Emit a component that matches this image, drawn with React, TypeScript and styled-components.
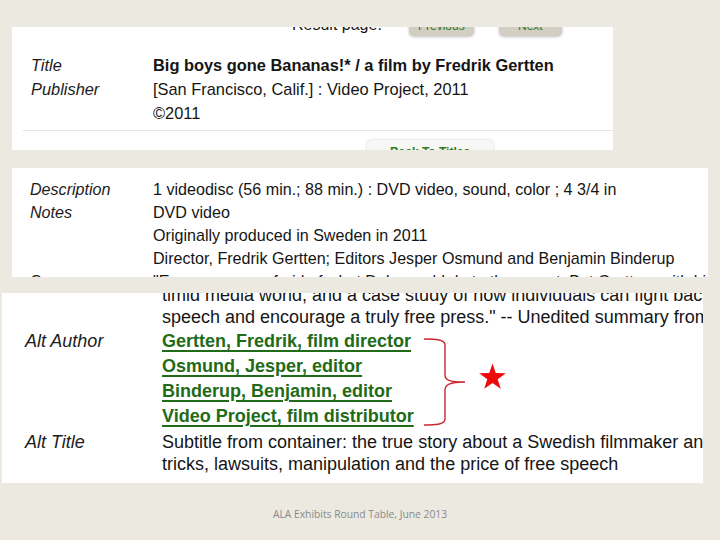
import React from "react";
import styled, { createGlobalStyle } from "styled-components";

const GlobalStyle = createGlobalStyle`
body {
  margin: 0;
  background-color: #ece9e0;
  font-family: "Liberation Sans", Arial, sans-serif;
  color: #151515;
}
`;

const Page = styled.main`
  width: 720px;
  height: 540px;
  box-sizing: border-box;
  padding-top: 27px;
  display: flex;
  flex-direction: column;
  align-items: flex-start;
  overflow: hidden;
`;

const Panel = styled.section<{ $left: number; $width: number; $height: number; $gap?: number }>`
  position: relative;
  flex: none;
  margin-left: ${(p) => p.$left}px;
  margin-top: ${(p) => p.$gap ?? 0}px;
  width: ${(p) => p.$width}px;
  height: ${(p) => p.$height}px;
  background: #fff;
  overflow: hidden;
`;

const TopBar = styled.div`
  height: 9px;
  display: flex;
  align-items: flex-end;
  gap: 25px;
  padding-left: 280px;
`;

const ResultText = styled.span`
  font-size: 16px;
  line-height: 16px;
  margin-bottom: 3px;
  margin-right: 2px;
`;

const PageButton = styled.span<{ $width: number }>`
  box-sizing: border-box;
  width: ${(p) => p.$width}px;
  padding-bottom: 3px;
  text-align: center;
  font-size: 12px;
  line-height: 14px;
  color: #2f7a25;
  background: #d2cec2;
  border-radius: 0 0 5px 5px;
  box-shadow: 0 1px 3px rgba(0, 0, 0, 0.25);
`;

const Record = styled.dl<{ $label: number; $pad: number; $size: number; $line: number; $top: number }>`
  display: grid;
  grid-template-columns: ${(p) => p.$label}px 1fr;
  margin: ${(p) => p.$top}px 0 0;
  padding-left: ${(p) => p.$pad}px;
  font-size: ${(p) => p.$size}px;
  line-height: ${(p) => p.$line}px;
  white-space: nowrap;
`;

const Label = styled.dt<{ $line?: number }>`
  margin: 0;
  font-style: italic;
  color: #1c1c1c;
  ${(p) => (p.$line ? `line-height: ${p.$line}px;` : "")}
  padding-top: ${(p) => (p.$line ? 1 : 0)}px;
`;

const Value = styled.dd<{ $pad?: string }>`
  margin: 0;
  padding: ${(p) => p.$pad ?? "0"};
`;

const Line = styled.div``;

const Link = styled.a`
  display: block;
  width: max-content;
  line-height: 25px;
  font-weight: bold;
  color: #1f6b17;
  text-decoration: underline;
  text-decoration-thickness: 2px;
  text-underline-offset: 3px;
`;

const Divider = styled.hr`
  margin: 5px 0 0 11px;
  border: none;
  height: 1px;
  background: #e4e4e4;
`;

const BackButton = styled.div`
  box-sizing: border-box;
  margin: 9px 0 0 355px;
  width: 126px;
  height: 22px;
  padding-top: 5px;
  text-align: center;
  font-size: 12px;
  line-height: 14px;
  font-weight: bold;
  color: #2f7a25;
  background: #f7f7f5;
  border-radius: 5px;
  box-shadow: 0 0 3px rgba(0, 0, 0, 0.2);
`;

const Annotation = styled.svg`
  position: absolute;
  left: 416px;
  top: 42px;
`;

const Footer = styled.footer`
  align-self: center;
  margin-top: 24px;
  font-family: "Open Sans", "Liberation Sans", sans-serif;
  font-size: 10.3px;
  line-height: 14px;
  color: #8a8a8a;
`;

export default function App() {
  return (
    <Page>
      <GlobalStyle />
      <Panel $left={12} $width={601} $height={123}>
        <TopBar>
          <ResultText>Result page:</ResultText>
          <PageButton $width={65}>Previous</PageButton>
          <PageButton $width={63}>Next</PageButton>
        </TopBar>
        <Record $label={122} $pad={19} $size={16.4} $line={24} $top={17}>
          <Label>Title</Label>
          <Value>
            <strong>Big boys gone Bananas!* / a film by Fredrik Gertten</strong>
          </Value>
          <Label>Publisher</Label>
          <Value>
            <Line>[San Francisco, Calif.] : Video Project, 2011</Line>
            <Line>©2011</Line>
          </Value>
        </Record>
        <Divider />
        <BackButton>Back To Titles</BackButton>
      </Panel>

      <Panel $left={12} $width={696} $height={109} $gap={18}>
        <Record $label={123} $pad={18} $size={16.1} $line={23} $top={10}>
          <Label>Description</Label>
          <Value>1 videodisc (56 min.; 88 min.) : DVD video, sound, color ; 4 3/4 in</Value>
          <Label>Notes</Label>
          <Value>
            <Line>DVD video</Line>
            <Line>Originally produced in Sweden in 2011</Line>
            <Line>Director, Fredrik Gertten; Editors Jesper Osmund and Benjamin Binderup</Line>
          </Value>
          <Label>Summary</Label>
          <Value>"Everyone was afraid of what Dole would do to them next. But Gertten, with his</Value>
        </Record>
      </Panel>

      <Panel $left={2} $width={701} $height={190} $gap={16}>
        <Record $label={137} $pad={23} $size={18} $line={22} $top={-9}>
          <Label />
          <Value>
            <Line>timid media world, and a case study of how individuals can fight back to defend free</Line>
            <Line>speech and encourage a truly free press." -- Unedited summary from container</Line>
          </Value>
          <Label $line={25}>Alt Author</Label>
          <Value $pad="1px 0 2px">
            <Link>Gertten, Fredrik, film director</Link>
            <Link>Osmund, Jesper, editor</Link>
            <Link>Binderup, Benjamin, editor</Link>
            <Link>Video Project, film distributor</Link>
          </Value>
          <Label>Alt Title</Label>
          <Value>
            <Line>Subtitle from container: the true story about a Swedish filmmaker and a giant's dirty</Line>
            <Line>tricks, lawsuits, manipulation and the price of free speech</Line>
          </Value>
        </Record>
        <Annotation width="92" height="96" viewBox="0 0 92 96">
          <path
            d="M6 4 C16 4, 27 4, 27 10 L27 40 C27 45, 31 47, 47 47 C31 47, 27 50, 27 55 L27 84 C27 90, 16 90, 6 90"
            fill="none"
            stroke="#c8282e"
            strokeWidth="1.4"
          />
          <polygon
            points="74.5,28.5 77.73,38.05 87.81,38.17 79.73,44.2 82.73,53.83 74.5,48 66.27,53.83 69.27,44.2 61.19,38.17 71.27,38.05"
            fill="#ee0a0a"
          />
        </Annotation>
      </Panel>

      <Footer>ALA Exhibits Round Table, June 2013</Footer>
    </Page>
  );
}
